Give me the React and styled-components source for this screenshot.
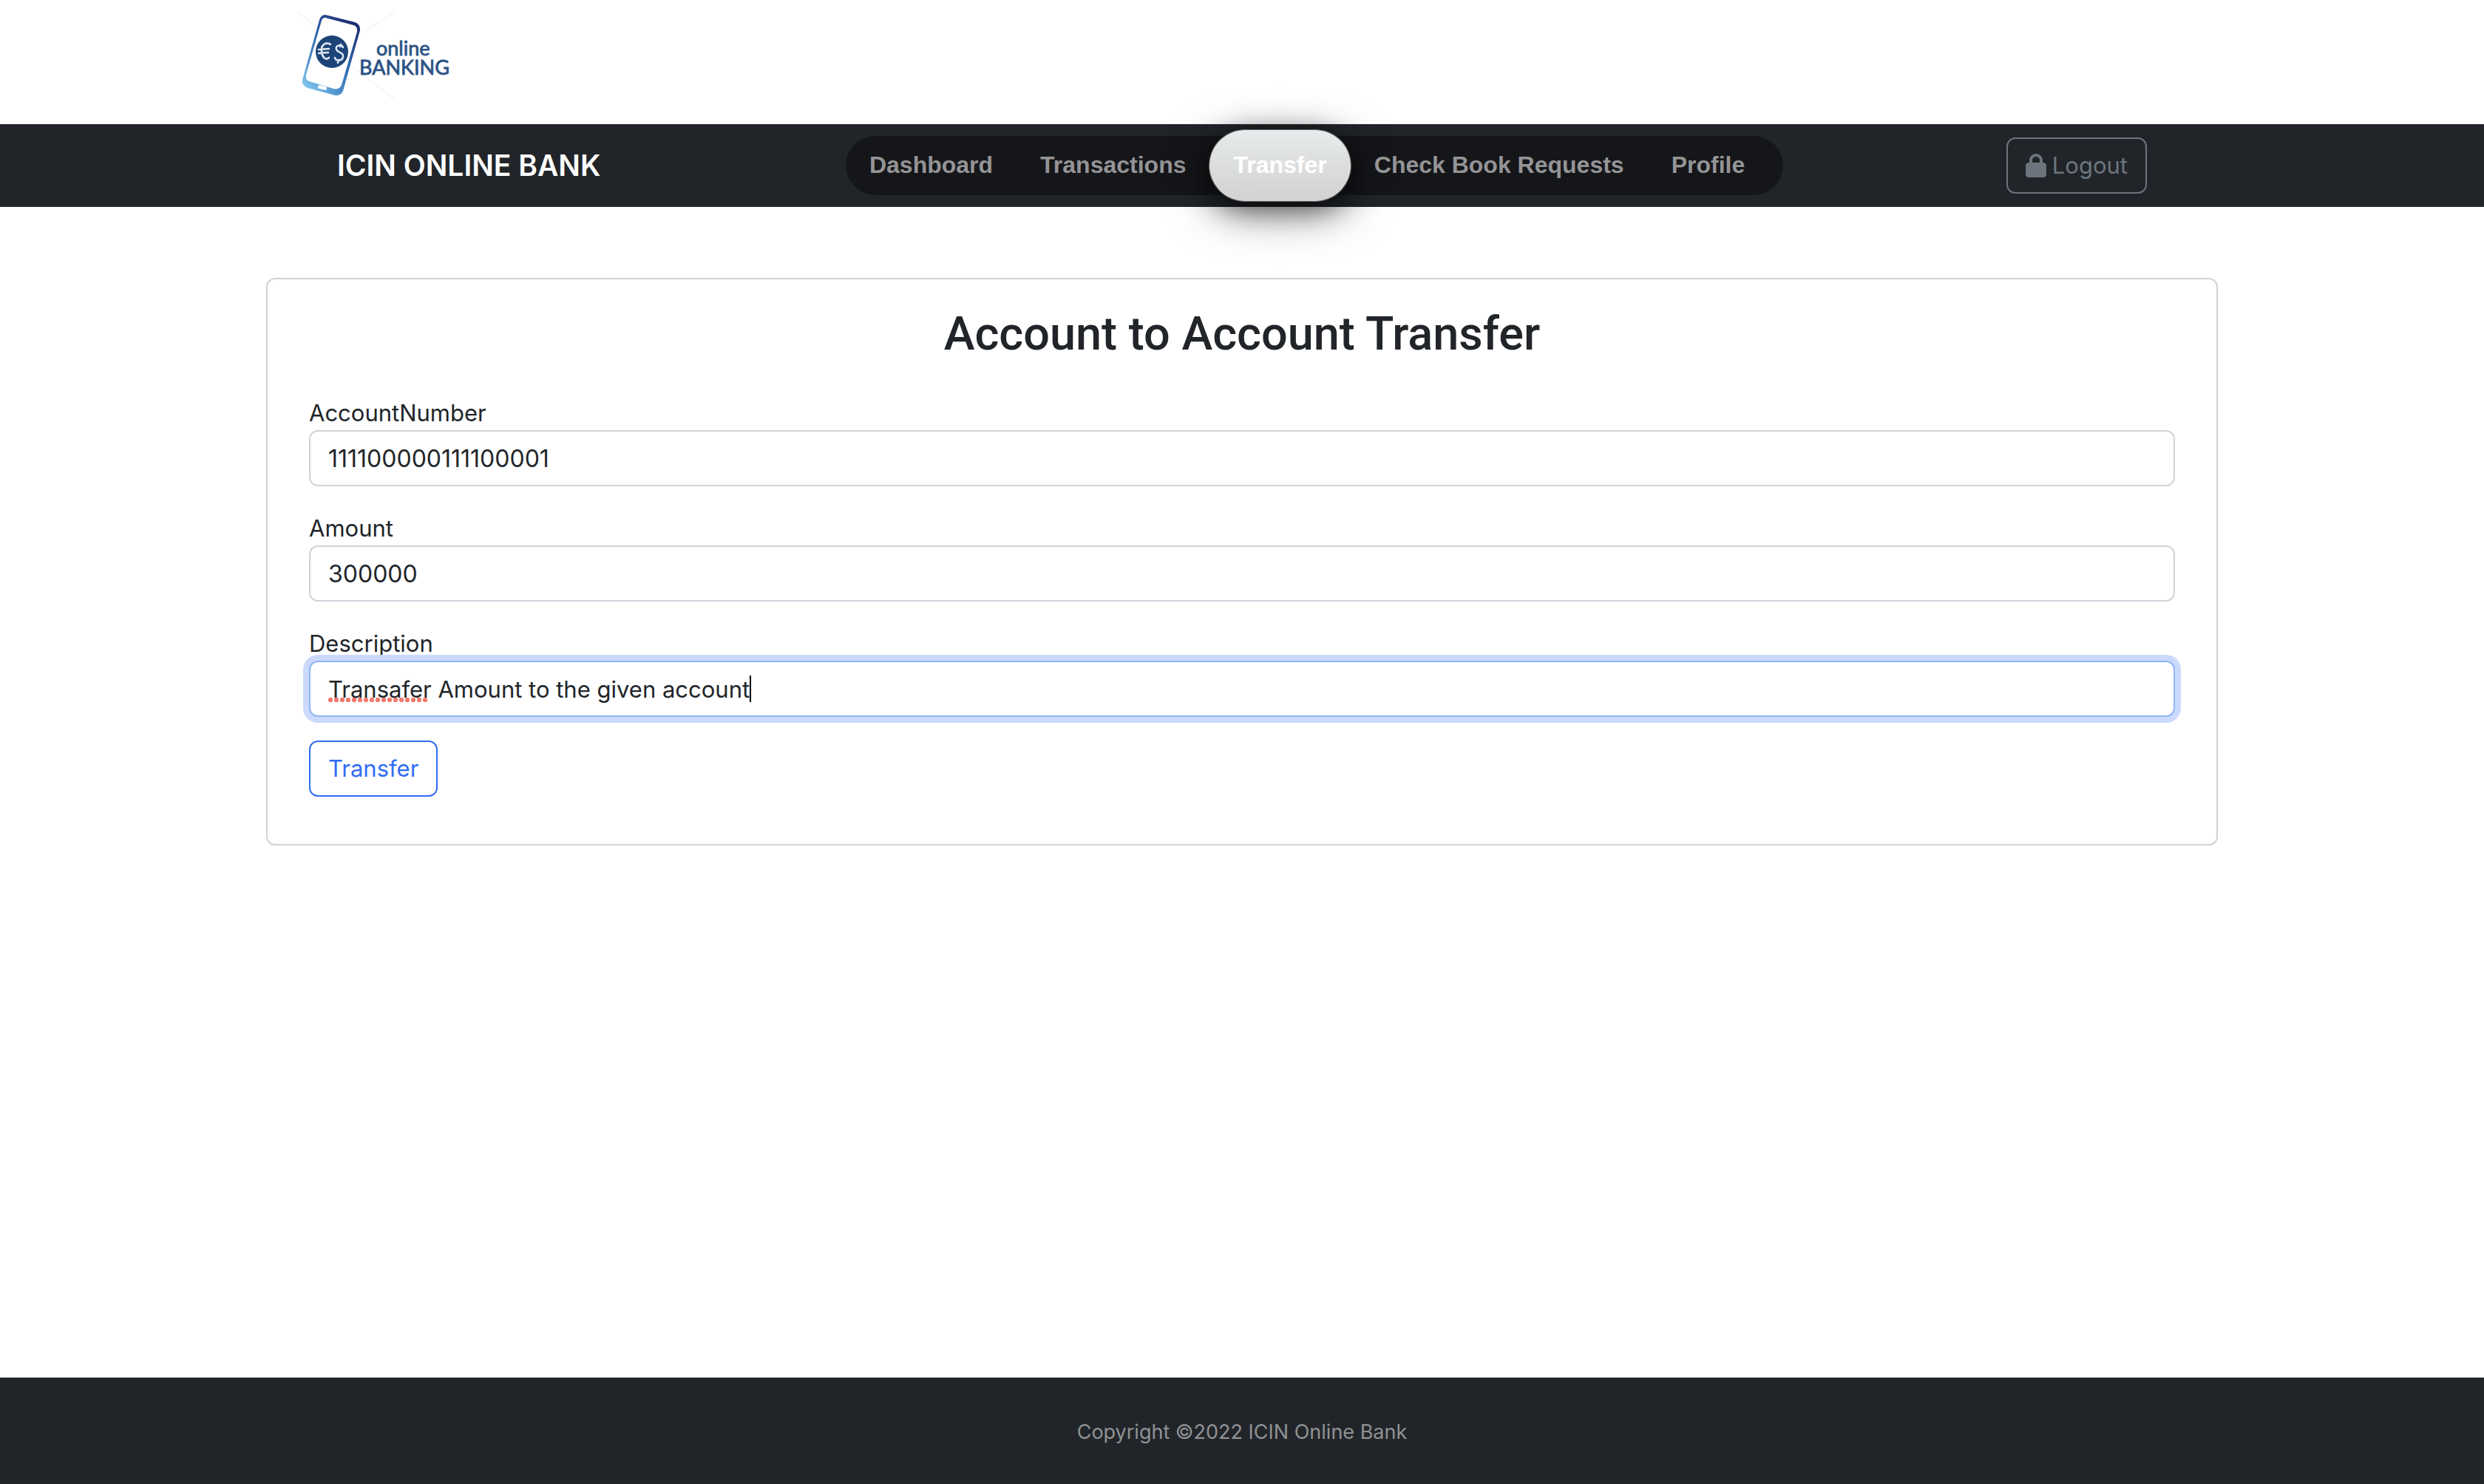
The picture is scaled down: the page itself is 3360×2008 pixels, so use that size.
import React, { useState } from "react";
import styled, { createGlobalStyle } from "styled-components";
import { FaLock } from "react-icons/fa6";

const GlobalStyle = createGlobalStyle`
  *, *::before, *::after { box-sizing: border-box; }
  body {
    margin: 0;
    background: #fff;
    color: #212529;
    font-family: Inter, "Liberation Sans", sans-serif;
    font-size: 31px;
    line-height: 48px;
  }
`;

const Page = styled.div`
  min-height: 100vh;
  display: flex;
  flex-direction: column;
`;

const Container = styled.div`
  width: 100%;
  max-width: 2640px;
  margin: 0 auto;
`;

const Header = styled(Container)`
  padding: 16px 40px 32px;
`;

const LogoLink = styled.a`
  display: block;
  width: 240px;
  svg { display: block; width: 240px; height: 120px; }
`;

const Navbar = styled.nav`
  background: #212529;
`;

const NavInner = styled(Container)`
  display: flex;
  align-items: center;
  justify-content: space-between;
  padding: 16px 96px;
`;

const Brand = styled.a`
  margin-right: 30px;
  color: #fff;
  font-size: 39px;
  font-weight: 600;
  text-decoration: none;
  white-space: nowrap;
`;

const NavList = styled.ul`
  display: flex;
  align-items: center;
  height: 80px;
  margin: 0;
  padding: 0 20px 0 0;
  border-radius: 40px;
  background: #151619;
  list-style: none;
`;

const NavLink = styled.a`
  position: relative;
  display: block;
  padding: 23px 32px 25px;
  border-radius: 48px;
  color: #949496;
  font-family: "Liberation Sans", Arial, sans-serif;
  font-size: 32px;
  font-weight: 700;
  text-decoration: none;
  white-space: nowrap;

  &[aria-current="page"] {
    color: #fff;
    background: linear-gradient(#e7ebeb, #dcdedd 50%, #d2d1d3);
    box-shadow: 0 0 0 1px rgba(255, 255, 255, 0.35), 0 8px 36px rgba(0, 0, 0, 0.5), 0 14px 60px rgba(0, 0, 0, 0.5);
  }
`;

const OutlineButton = styled.button`
  display: inline-flex;
  align-items: center;
  gap: 8px;
  height: 76px;
  padding: 0 24px;
  border: 2px solid ${(p) => p.$color};
  border-radius: 12px;
  background: transparent;
  color: ${(p) => p.$color};
  font: inherit;
  cursor: pointer;
`;

const LockIcon = styled(FaLock)`
  width: 28px;
  height: 32px;
`;

const Main = styled(Container)`
  flex: 1;
  padding-top: 96px;
`;

const Card = styled.section`
  padding: 36px 56px 64px;
  border: 2px solid #d3d3d3;
  border-radius: 12px;
`;

const Title = styled.h1`
  margin: 0 0 44px;
  font-family: Roboto, Inter, sans-serif;
  font-size: 63px;
  font-weight: 500;
  line-height: 76px;
  text-align: center;
`;

const Form = styled.form`
  display: flex;
  flex-direction: column;
  gap: 32px;
`;

const Actions = styled.div`
  display: flex;
`;

const Field = styled.div`
  display: flex;
  flex-direction: column;
`;

const Label = styled.label`
  padding-top: 2px;
  line-height: 46px;
`;

const InputBox = styled.div`
  position: relative;
  display: flex;
`;

const Input = styled.input`
  width: 100%;
  height: 76px;
  padding: 0 24px;
  border: 2px solid #ced4da;
  border-radius: 12px;
  outline: none;
  background: #fff;
  color: #212529;
  font: inherit;
  font-size: ${(p) => (p.inputMode === "numeric" ? 32 : 31)}px;
  caret-color: transparent;

  &:focus {
    border-color: #90b5f8;
    box-shadow: 0 0 0 8px #cbd9fc;
  }
`;

const SpellingMark = styled.span`
  position: absolute;
  left: 26px;
  top: 50px;
  width: 136px;
  height: 6px;
  background: radial-gradient(circle at 3px 3px, #f37b6f 3px, transparent 3px) 0 0 / 8px 6px repeat-x;
  pointer-events: none;
`;

const Caret = styled.span`
  position: absolute;
  left: 596px;
  top: 20px;
  width: 2px;
  height: 36px;
  background: #000;
  pointer-events: none;
`;

const Footer = styled.footer`
  padding: 50px 32px 46px;
  background: #212529;
  color: #909294;
  font-size: 27px;
  text-align: center;
`;

const LogoText = styled.text`
  font-family: Lato, sans-serif;
  font-size: 27px;
  font-weight: 400;
  fill: #2c5385;
  stroke: #2c5385;
  stroke-width: 0.8px;
`;

function Logo() {
  return (
    <svg viewBox="0 0 240 120" role="img" aria-label="online BANKING">
      <defs>
        <linearGradient id="phone" x1="0.1" y1="0.95" x2="0.75" y2="0.05">
          <stop offset="0" stopColor="#86c9f2" />
          <stop offset="0.3" stopColor="#4a8ccb" />
          <stop offset="0.65" stopColor="#2f65a8" />
          <stop offset="1" stopColor="#1f2f72" />
        </linearGradient>
      </defs>
      <path d="M2 0L32 24M134 0L92 28M76 74L136 120" stroke="#f6f6f6" strokeWidth="2" />
      <path
        fill="url(#phone)"
        fillRule="evenodd"
        d="M40 4L80 14Q88 17 87 25L64 107Q61 114 53 113L16 103Q8 100 9 92L32 11Q34 4 40 4Z
           M40 8Q36 8 35 12L14 85Q13 92 18 94L51 104Q59 106 62 99L83 27Q84 20 78 18Z"
      />
      <rect x="30" y="100" width="12" height="5" rx="2" fill="#fff" transform="rotate(13 36 103)" />
      <circle cx="49" cy="54" r="22" fill="#1d4478" />
      <g fill="none" stroke="#dbe6f2" strokeWidth="2.6" strokeLinecap="round">
        <path d="M47 44C39 40 34 46 35 54C36 62 41 66 45 62M31 51L45 50M31 56L44 55" />
        <path d="M64 48C61 43 53 46 55 51C57 56 65 54 64 61C63 67 54 67 53 62M61 44L60 47M58 65L57 69" />
      </g>
      <LogoText x="109" y="59">online</LogoText>
      <LogoText x="86" y="85">BANKING</LogoText>
    </svg>
  );
}

const NAV = ["Dashboard", "Transactions", "Transfer", "Check Book Requests", "Profile"];

const FIELDS = [
  { id: "accountNumber", label: "AccountNumber", inputMode: "numeric" },
  { id: "amount", label: "Amount", inputMode: "numeric" },
  { id: "description", label: "Description", autoFocus: true, misspelled: true },
];

export default function App() {
  const [values, setValues] = useState({
    accountNumber: "111100000111100001",
    amount: "300000",
    description: "Transafer Amount to the given account",
  });

  return (
    <Page>
      <GlobalStyle />
      <Header as="header">
        <LogoLink href="#home"><Logo /></LogoLink>
      </Header>
      <Navbar>
        <NavInner>
          <Brand href="#home">ICIN ONLINE BANK</Brand>
          <NavList>
            {NAV.map((item) => (
              <li key={item}>
                <NavLink href={"#" + item.toLowerCase().replace(/ /g, "-")} aria-current={item === "Transfer" ? "page" : undefined}>
                  {item}
                </NavLink>
              </li>
            ))}
          </NavList>
          <OutlineButton type="button" $color="#6c757d">
            <LockIcon aria-hidden="true" />
            Logout
          </OutlineButton>
        </NavInner>
      </Navbar>
      <Main as="main">
        <Card>
          <Title>Account to Account Transfer</Title>
          <Form onSubmit={(e) => e.preventDefault()}>
            {FIELDS.map(({ id, label, misspelled, ...rest }) => (
              <Field key={id}>
                <Label htmlFor={id}>{label}</Label>
                <InputBox>
                  <Input
                    id={id}
                    type="text"
                    spellCheck={false}
                    value={values[id]}
                    onChange={(e) => setValues({ ...values, [id]: e.target.value })}
                    {...rest}
                  />
                  {misspelled && <SpellingMark />}
                  {misspelled && <Caret />}
                </InputBox>
              </Field>
            ))}
            <Actions>
              <OutlineButton type="submit" $color="#316cf4">Transfer</OutlineButton>
            </Actions>
          </Form>
        </Card>
      </Main>
      <Footer>Copyright ©2022 ICIN Online Bank</Footer>
    </Page>
  );
}
